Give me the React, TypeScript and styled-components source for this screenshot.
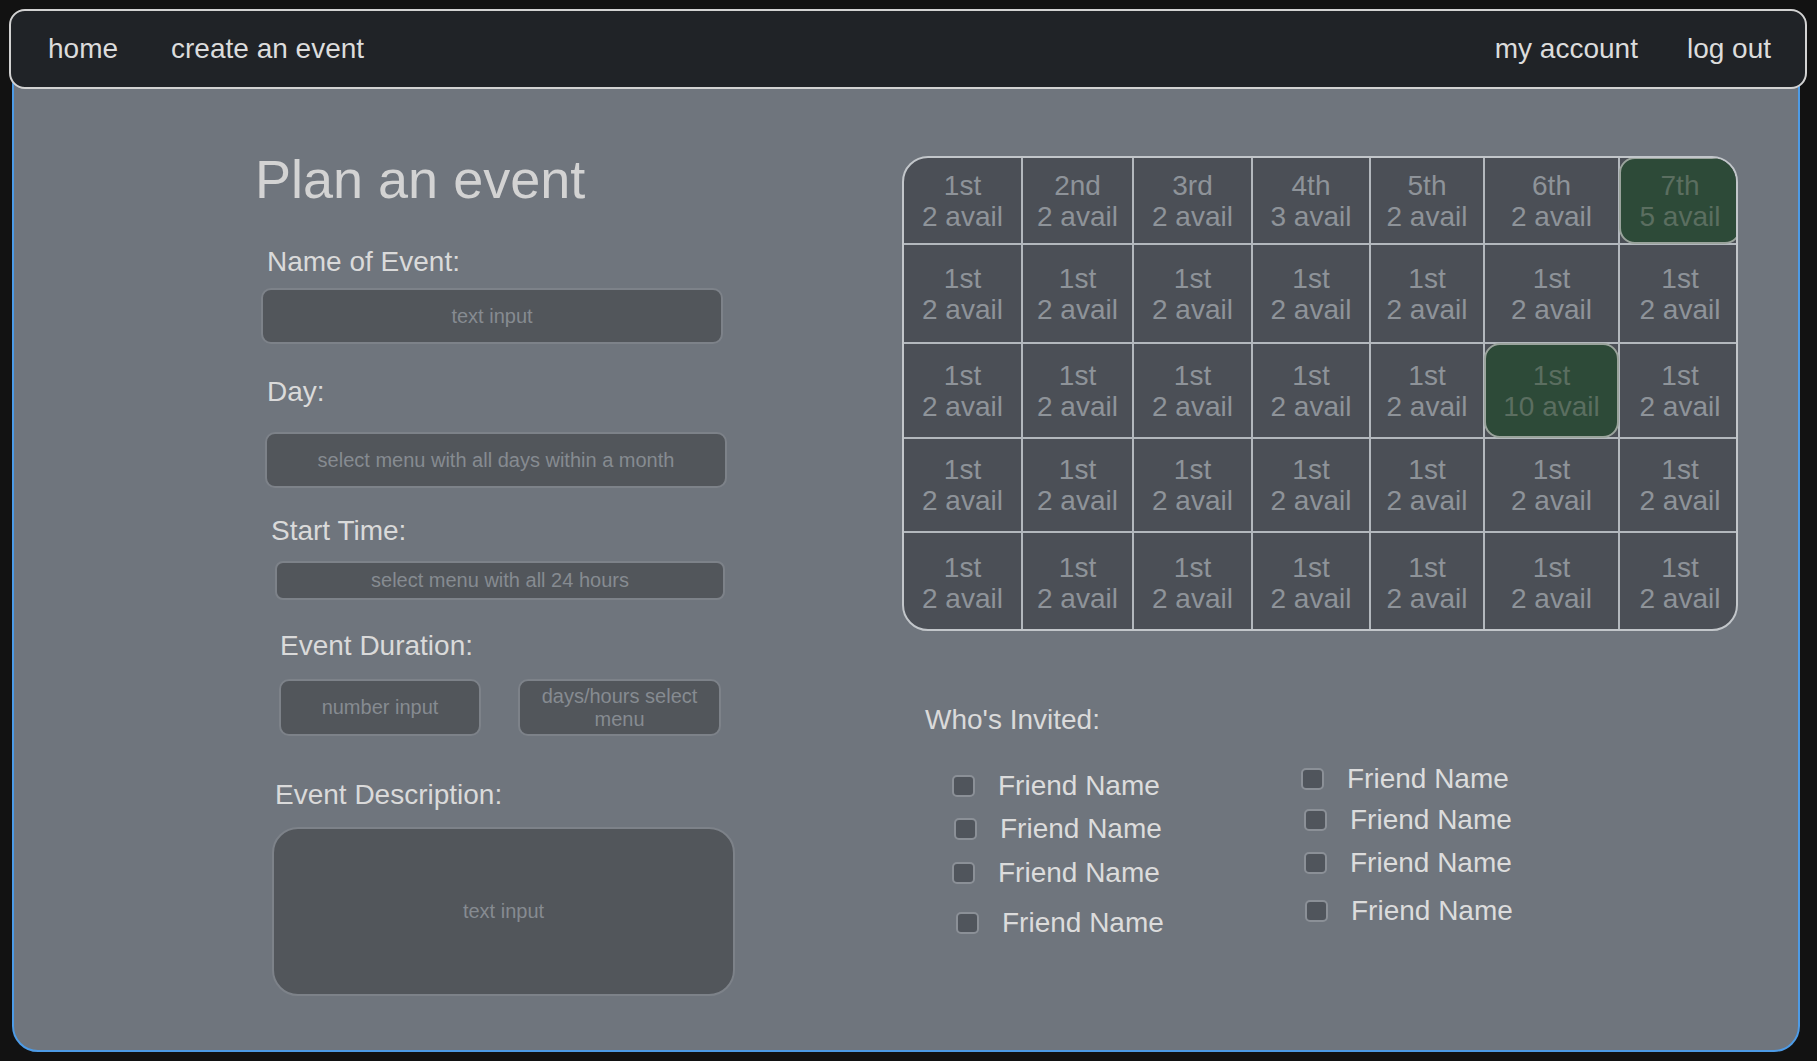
import React from "react";
import styled, { createGlobalStyle } from "styled-components";

const GlobalStyle = createGlobalStyle`
  html, body { margin: 0; padding: 0; background: #121212; }
  body { font-family: "Liberation Sans", Arial, sans-serif; }
  * { box-sizing: border-box; }
`;

const Page = styled.div`
  display: flex;
  flex-direction: column;
  padding: 9px 10px 9px 9px;
  height: 1061px;
`;

const Nav = styled.nav`
  position: relative;
  z-index: 1;
  height: 80px;
  display: flex;
  align-items: center;
  padding: 0 34px 0 37px;
  background: #202327;
  border: 2px solid #d2d2d2;
  border-radius: 16px;
`;

const NavGroup = styled.div<{ $right?: boolean }>`
  display: flex;
  gap: ${(p) => (p.$right ? 49 : 53)}px;
  margin-left: ${(p) => (p.$right ? "auto" : "0")};
`;

const NavLink = styled.a`
  font-size: 28px;
  color: #dcdcdc;
  text-decoration: none;
  line-height: 1;
`;

const Panel = styled.main`
  flex: 1;
  margin: -30px 7px 0 3px;
  background: #6f757d;
  border: 2px solid #4d9be6;
  border-radius: 26px;
  display: grid;
  grid-template-columns: 480px 836px;
  column-gap: 167px;
  padding: 87px 0 0 241px;
`;

const FormColumn = styled.section`
  display: flex;
  flex-direction: column;
  align-items: flex-start;
`;

const Title = styled.h1`
  margin: 0;
  font-size: 54px;
  font-weight: 400;
  line-height: 62px;
  color: #d3d3d3;
`;

const Label = styled.label<{ $indent: number; $gap: number }>`
  display: block;
  font-size: 28px;
  line-height: 32px;
  color: #dadada;
  margin: ${(p) => p.$gap}px 0 0 ${(p) => p.$indent}px;
`;

const Field = styled.div<{ $indent: number; $gap: number; $w: number; $h: number; $radius: number }>`
  display: flex;
  align-items: center;
  justify-content: center;
  text-align: center;
  width: ${(p) => p.$w}px;
  height: ${(p) => p.$h}px;
  margin: ${(p) => p.$gap}px 0 0 ${(p) => p.$indent}px;
  background: #52565b;
  border: 2px solid #7d8289;
  border-radius: ${(p) => p.$radius}px;
  color: #868b91;
  font-size: 20px;
  line-height: 23px;
  padding: 0 14px;
`;

const FieldRow = styled.div<{ $indent: number; $gap: number }>`
  display: flex;
  gap: 37px;
  margin: ${(p) => p.$gap}px 0 0 ${(p) => p.$indent}px;
`;

const RightColumn = styled.section`
  display: flex;
  flex-direction: column;
  align-items: flex-start;
`;

const Calendar = styled.div`
  margin-top: 8px;
  width: 836px;
  height: 475px;
  display: grid;
  grid-template-columns: 119px 111px 119px 118px 114px 135px 120px;
  grid-template-rows: 87px 99px 95px 94px 100px;
  background: #4b4f56;
  border: 2px solid #c2c6ca;
  border-radius: 26px;
  overflow: hidden;
`;

const Cell = styled.div<{ $lastCol: boolean; $lastRow: boolean }>`
  display: flex;
  align-items: stretch;
  justify-content: stretch;
  border-right: ${(p) => (p.$lastCol ? "none" : "2px solid #b3b8bd")};
  border-bottom: ${(p) => (p.$lastRow ? "none" : "2px solid #b3b8bd")};
`;

const CellInner = styled.div<{ $hot: boolean }>`
  flex: 1;
  display: flex;
  flex-direction: column;
  align-items: center;
  justify-content: center;
  font-size: 28px;
  line-height: 31px;
  color: ${(p) => (p.$hot ? "#5b6e60" : "#8e9399")};
  background: ${(p) => (p.$hot ? "#2d4a38" : "transparent")};
  border: ${(p) => (p.$hot ? "2px solid #9aa39c" : "none")};
  border-radius: ${(p) => (p.$hot ? "16px" : "0")};
  margin: ${(p) => (p.$hot ? "-1px" : "0")};
`;

const InvitedTitle = styled.h2`
  margin: 73px 0 0 23px;
  font-size: 28px;
  font-weight: 400;
  line-height: 32px;
  color: #dadada;
`;

const FriendsGrid = styled.div`
  display: grid;
  grid-template-columns: 349px 349px;
  margin: 34px 0 0 50px;
`;

const FriendColumn = styled.div<{ $shift: number }>`
  display: flex;
  flex-direction: column;
  margin-top: ${(p) => p.$shift}px;
`;

const FriendRow = styled.label<{ $top: number; $indent: number }>`
  display: flex;
  align-items: center;
  gap: 23px;
  height: 32px;
  margin: ${(p) => p.$top}px 0 0 ${(p) => p.$indent}px;
  font-size: 28px;
  color: #dcdcdc;
`;

const Box = styled.span`
  width: 23px;
  height: 22px;
  border-radius: 5px;
  background: #50555c;
  border: 2px solid #8b9097;
  flex: none;
`;

type Day = { day: string; avail: number; hot?: boolean };

const rows: Day[][] = [
  [
    { day: "1st", avail: 2 },
    { day: "2nd", avail: 2 },
    { day: "3rd", avail: 2 },
    { day: "4th", avail: 3 },
    { day: "5th", avail: 2 },
    { day: "6th", avail: 2 },
    { day: "7th", avail: 5, hot: true },
  ],
  Array.from({ length: 7 }, () => ({ day: "1st", avail: 2 })),
  Array.from({ length: 7 }, (_, i) =>
    i === 5 ? { day: "1st", avail: 10, hot: true } : { day: "1st", avail: 2 }
  ),
  Array.from({ length: 7 }, () => ({ day: "1st", avail: 2 })),
  Array.from({ length: 7 }, () => ({ day: "1st", avail: 2 })),
];

const leftFriends = [
  { top: 0, indent: 0 },
  { top: 11, indent: 2 },
  { top: 12, indent: 0 },
  { top: 18, indent: 4 },
];
const rightFriends = [
  { top: 0, indent: 0 },
  { top: 9, indent: 3 },
  { top: 11, indent: 3 },
  { top: 16, indent: 4 },
];

export default function App() {
  return (
    <>
      <GlobalStyle />
      <Page>
        <Nav>
          <NavGroup>
            <NavLink>home</NavLink>
            <NavLink>create an event</NavLink>
          </NavGroup>
          <NavGroup $right>
            <NavLink>my account</NavLink>
            <NavLink>log out</NavLink>
          </NavGroup>
        </Nav>
        <Panel>
          <FormColumn>
            <Title>Plan an event</Title>
            <Label $indent={12} $gap={36}>Name of Event:</Label>
            <Field $indent={6} $gap={10} $w={462} $h={56} $radius={10}>text input</Field>
            <Label $indent={12} $gap={32}>Day:</Label>
            <Field $indent={10} $gap={24} $w={462} $h={56} $radius={10}>
              select menu with all days within a month
            </Field>
            <Label $indent={16} $gap={27}>Start Time:</Label>
            <Field $indent={20} $gap={14} $w={450} $h={39} $radius={8}>
              select menu with all 24 hours
            </Field>
            <Label $indent={25} $gap={30}>Event Duration:</Label>
            <FieldRow $indent={24} $gap={17}>
              <Field $indent={0} $gap={0} $w={202} $h={57} $radius={10}>number input</Field>
              <Field $indent={0} $gap={0} $w={203} $h={57} $radius={10}>days/hours select menu</Field>
            </FieldRow>
            <Label $indent={20} $gap={43}>Event Description:</Label>
            <Field $indent={17} $gap={16} $w={463} $h={169} $radius={26}>text input</Field>
          </FormColumn>
          <RightColumn>
            <Calendar>
              {rows.map((row, r) =>
                row.map((d, c) => (
                  <Cell key={`${r}-${c}`} $lastCol={c === 6} $lastRow={r === 4}>
                    <CellInner $hot={!!d.hot}>
                      <span>{d.day}</span>
                      <span>{d.avail} avail</span>
                    </CellInner>
                  </Cell>
                ))
              )}
            </Calendar>
            <InvitedTitle>Who's Invited:</InvitedTitle>
            <FriendsGrid>
              <FriendColumn $shift={0}>
                {leftFriends.map((f, i) => (
                  <FriendRow key={i} $top={f.top} $indent={f.indent}>
                    <Box />
                    Friend Name
                  </FriendRow>
                ))}
              </FriendColumn>
              <FriendColumn $shift={-7}>
                {rightFriends.map((f, i) => (
                  <FriendRow key={i} $top={f.top} $indent={f.indent}>
                    <Box />
                    Friend Name
                  </FriendRow>
                ))}
              </FriendColumn>
            </FriendsGrid>
          </RightColumn>
        </Panel>
      </Page>
    </>
  );
}
